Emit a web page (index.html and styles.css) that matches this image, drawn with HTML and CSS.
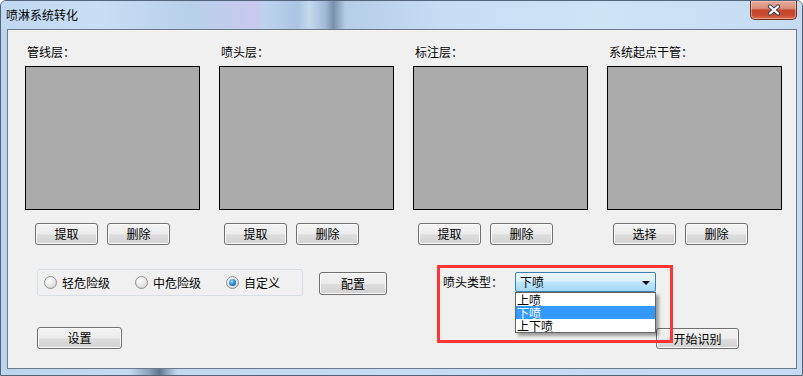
FILE: index.html
```html
<!DOCTYPE html>
<html lang="zh-CN">
<head>
<meta charset="utf-8">
<title>喷淋系统转化</title>
<link rel="stylesheet" href="styles.css">
</head>
<body>
<div class="window">
  <div class="titlebar">
    <span class="title">喷淋系统转化</span>
    <div class="close">
      <svg width="14" height="12" viewBox="0 0 14 12">
        <path d="M3 2.5 L11 9.5 M11 2.5 L3 9.5" stroke="#3b4656" stroke-width="4.2" stroke-linecap="round" fill="none"/>
        <path d="M3 2.5 L11 9.5 M11 2.5 L3 9.5" stroke="#ffffff" stroke-width="2.2" stroke-linecap="round" fill="none"/>
      </svg>
    </div>
  </div>
  <div class="client">
    <div class="panels">
      <div class="panel first">
        <div class="label">管线层：</div>
        <div class="canvas"></div>
        <div class="btns"><button class="btn">提取</button><button class="btn">删除</button></div>
      </div>
      <div class="panel">
        <div class="label">喷头层：</div>
        <div class="canvas"></div>
        <div class="btns"><button class="btn">提取</button><button class="btn">删除</button></div>
      </div>
      <div class="panel">
        <div class="label">标注层：</div>
        <div class="canvas"></div>
        <div class="btns"><button class="btn">提取</button><button class="btn">删除</button></div>
      </div>
      <div class="panel last">
        <div class="label">系统起点干管：</div>
        <div class="canvas"></div>
        <div class="btns"><button class="btn">选择</button><button class="btn">删除</button></div>
      </div>
    </div>

    <div class="row1">
      <div class="radiogroup">
        <label class="radio"><span class="dot"></span>轻危险级</label>
        <label class="radio"><span class="dot"></span>中危险级</label>
        <label class="radio"><span class="dot on"></span>自定义</label>
      </div>
      <button class="btn cfg">配置</button>
      <div class="combo-group">
        <span class="combo-label">喷头类型：</span>
        <div class="combo">
          <span>下喷</span>
          <span class="arrow"></span>
          <ul class="dropdown">
            <li>上喷</li>
            <li class="sel">下喷</li>
            <li>上下喷</li>
          </ul>
        </div>
        <div class="annot"></div>
      </div>
    </div>

    <div class="row2">
      <button class="btn set">设置</button>
      <button class="btn start">开始识别</button>
    </div>
  </div>
</div>
</body>
</html>
```

FILE: styles.css
```css
* {
  box-sizing: border-box;
  margin: 0;
  padding: 0;
}

html, body {
  width: 803px;
  height: 376px;
  overflow: hidden;
}

body {
  font-family: "Noto Sans CJK SC", "Noto Sans", sans-serif;
  font-size: 12px;
  color: #000;
  background: #ffffff;
}

.window {
  width: 803px;
  height: 376px;
  border: 1px solid #52657a;
  border-radius: 6px 6px 0 0;
  display: flex;
  flex-direction: column;
  background: linear-gradient(90deg,
    #bcd5ee 0%, #c2daf2 16%, #8aa1ba 18.5%, #5f7590 19.8%, #8fa7c0 20.8%,
    #c0d8f0 22%, #c6ddf4 60%, #c4dbf2 100%);
  overflow: hidden;
}

.titlebar {
  height: 28px;
  flex: none;
  display: flex;
  justify-content: space-between;
  align-items: flex-start;
  background: linear-gradient(90deg,
    #c0d8f0 0%, #c8def4 12%, #b7d0ea 24%, #c9c8ee 31.5%, #bcd3ee 33%,
    #aac5e2 37%, #c3d9ef 38.5%, #9fb9d6 40.5%, #7890ab 41.5%, #b4cde7 43%,
    #c6ddf4 55%, #cfe3f7 75%, #c4dbf2 100%);
}

.title {
  padding-left: 5px;
  line-height: 28px;
  color: #000;
}

.close {
  width: 47px;
  height: 19px;
  margin-right: 5px;
  border: 1px solid #6e3126;
  border-top: none;
  border-radius: 0 0 5px 5px;
  background: linear-gradient(#e8ab9d 0%, #dc8f7d 40%, #c5462d 52%, #c84a30 78%, #dd6b50 100%);
  box-shadow: inset 0 0 0 1px rgba(255, 220, 210, 0.45);
  display: flex;
  align-items: center;
  justify-content: center;
}

.client {
  flex: 1;
  margin: 0 5px 6px 6px;
  border: 1px solid #6a7a8c;
  background: #f0f0f0;
}

.panels {
  display: grid;
  grid-template-columns: repeat(4, 175px);
  column-gap: 19px;
  padding: 15px 0 0 17px;
}

.label {
  height: 14px;
  line-height: 14px;
  padding-left: 2px;
}

.canvas {
  margin-top: 7px;
  height: 144px;
  background: #ababab;
  border: 1px solid #000;
}

.btns {
  display: flex;
  gap: 9px;
  margin-top: 13px;
  padding-left: 5px;
}

.first .btns {
  padding-left: 10px;
}

.last .btns {
  padding-left: 6px;
}

.btn {
  font: inherit;
  color: #000;
  width: 63px;
  height: 22px;
  line-height: 20px;
  text-align: center;
  border: 1px solid #707070;
  border-radius: 3px;
  background: linear-gradient(#f3f3f3 0%, #ececec 50%, #dddddd 54%, #d2d2d2 100%);
  box-shadow: inset 0 0 0 1px #fbfbfb;
}

.row1 {
  display: flex;
  align-items: flex-start;
  margin-top: 24px;
  padding-left: 29px;
}

.radiogroup {
  width: 266px;
  height: 27px;
  border: 1px solid #d5dfe5;
  border-radius: 3px;
  display: flex;
  align-items: center;
  padding-left: 6px;
  gap: 25px;
}

.radio {
  display: flex;
  align-items: center;
  gap: 5px;
  line-height: 14px;
}

.dot {
  width: 13px;
  height: 13px;
  border-radius: 50%;
  border: 1px solid #8e8f8f;
  background: radial-gradient(circle at 40% 35%, #ffffff 0%, #e4e4e4 55%, #c9c9c9 100%);
  display: flex;
  align-items: center;
  justify-content: center;
}

.dot.on::after {
  content: "";
  width: 7px;
  height: 7px;
  border-radius: 50%;
  background: radial-gradient(circle at 40% 35%, #9fe0ff 0%, #2a8fd6 45%, #0b4f8c 100%);
}

.cfg {
  width: 68px;
  height: 23px;
  margin-left: 16px;
  margin-top: 3px;
}

.combo-group {
  position: relative;
  display: flex;
  align-items: center;
  height: 20px;
  margin-top: 3px;
  margin-left: 56px;
}

.combo-label {
  width: 72px;
  line-height: 14px;
}

.combo {
  position: relative;
  width: 141px;
  height: 20px;
  line-height: 18px;
  padding-left: 4px;
  border: 1px solid #3c7fb1;
  border-radius: 2px;
  background: linear-gradient(#ecf7fd 0%, #dbf1fc 45%, #bee6fd 50%, #a6d8f4 100%);
}

.arrow {
  position: absolute;
  right: 5px;
  top: 8px;
  width: 0;
  height: 0;
  border-left: 4px solid transparent;
  border-right: 4px solid transparent;
  border-top: 4px solid #000;
}

.dropdown {
  position: absolute;
  left: -1px;
  top: 19px;
  width: 141px;
  list-style: none;
  background: #ffffff;
  border: 1px solid #646464;
  box-shadow: 3px 3px 3px rgba(0, 0, 0, 0.35);
  z-index: 5;
}

.dropdown li {
  height: 13px;
  line-height: 13px;
  padding-left: 1px;
}

.dropdown li.sel {
  background: #3399ff;
  color: #ffffff;
}

.annot {
  position: absolute;
  left: -6px;
  top: -7px;
  width: 236px;
  height: 78px;
  border: 3px solid #ff3434;
  z-index: 10;
  pointer-events: none;
}

.row2 {
  display: flex;
  justify-content: space-between;
  align-items: flex-start;
  margin-top: 31px;
  padding-left: 29px;
  padding-right: 57px;
}

.set {
  width: 85px;
}

.start {
  width: 83px;
  height: 21px;
  line-height: 19px;
  margin-top: 1px;
}
```
